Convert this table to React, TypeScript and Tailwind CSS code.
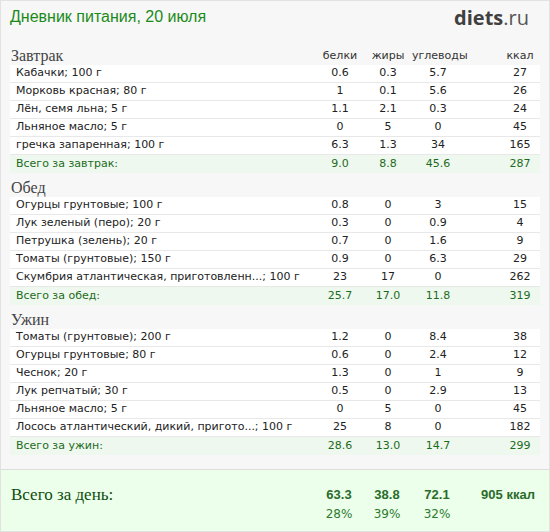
import React from "react";

type Item = { name: string; p: string; f: string; c: string; k: string };
type Meal = { title: string; items: Item[]; total: { label: string; p: string; f: string; c: string; k: string } };

const meals: Meal[] = [
  {
    title: "Завтрак",
    items: [
      { name: "Кабачки; 100 г", p: "0.6", f: "0.3", c: "5.7", k: "27" },
      { name: "Морковь красная; 80 г", p: "1", f: "0.1", c: "5.6", k: "26" },
      { name: "Лён, семя льна; 5 г", p: "1.1", f: "2.1", c: "0.3", k: "24" },
      { name: "Льняное масло; 5 г", p: "0", f: "5", c: "0", k: "45" },
      { name: "гречка запаренная; 100 г", p: "6.3", f: "1.3", c: "34", k: "165" },
    ],
    total: { label: "Всего за завтрак:", p: "9.0", f: "8.8", c: "45.6", k: "287" },
  },
  {
    title: "Обед",
    items: [
      { name: "Огурцы грунтовые; 100 г", p: "0.8", f: "0", c: "3", k: "15" },
      { name: "Лук зеленый (перо); 20 г", p: "0.3", f: "0", c: "0.9", k: "4" },
      { name: "Петрушка (зелень); 20 г", p: "0.7", f: "0", c: "1.6", k: "9" },
      { name: "Томаты (грунтовые); 150 г", p: "0.9", f: "0", c: "6.3", k: "29" },
      { name: "Скумбрия атлантическая, приготовленн...; 100 г", p: "23", f: "17", c: "0", k: "262" },
    ],
    total: { label: "Всего за обед:", p: "25.7", f: "17.0", c: "11.8", k: "319" },
  },
  {
    title: "Ужин",
    items: [
      { name: "Томаты (грунтовые); 200 г", p: "1.2", f: "0", c: "8.4", k: "38" },
      { name: "Огурцы грунтовые; 80 г", p: "0.6", f: "0", c: "2.4", k: "12" },
      { name: "Чеснок; 20 г", p: "1.3", f: "0", c: "1", k: "9" },
      { name: "Лук репчатый; 30 г", p: "0.5", f: "0", c: "2.9", k: "13" },
      { name: "Льняное масло; 5 г", p: "0", f: "5", c: "0", k: "45" },
      { name: "Лосось атлантический, дикий, пригото...; 100 г", p: "25", f: "8", c: "0", k: "182" },
    ],
    total: { label: "Всего за ужин:", p: "28.6", f: "13.0", c: "14.7", k: "299" },
  },
];

const cols = "grid grid-cols-[1fr_48px_48px_52px_76px] items-center";

const Row = ({ name, p, f, c, k, total }: Item & { total?: boolean }) => (
  <div
    className={`${cols} h-[18px] ${
      total ? "bg-[#eef8ee] text-[#1d6b1d]" : "bg-white text-[#222] border-b border-[#e8e8e8]"
    }`}
  >
    <span className="pl-[6px] whitespace-nowrap overflow-hidden">{name}</span>
    <span className="text-center">{p}</span>
    <span className="text-center">{f}</span>
    <span className="text-center">{c}</span>
    <span className="text-center pl-[36px]">{k}</span>
  </div>
);

export default function App() {
  return (
    <div className="w-[550px] h-[532px] bg-[#f7f7f7] border border-[#e2e2e2] flex flex-col font-['DejaVu_Sans',sans-serif] text-[11px]">
      <div className="flex justify-between items-start px-[9px] pt-[6px] h-[46px]">
        <h1 className="font-['Liberation_Sans',sans-serif] text-[16px] leading-[20px] text-[#1b8a1b]">
          Дневник питания, 20 июля
        </h1>
        <div className="font-['Open_Sans',sans-serif] text-[20px] leading-[24px] mr-[11px] mt-[-1px]">
          <span className="font-bold text-[#404040]">diets</span>
          <span className="text-[#555]">.ru</span>
        </div>
      </div>

      <div className="px-[9px] flex flex-col">
        {meals.map((m, i) => (
          <section key={m.title} className={i === 0 ? "" : "mt-[6px]"}>
            <div className={`${cols} h-[18px] leading-[18px]`}>
              <span className="font-['Liberation_Serif',serif] text-[16px] text-[#444] pl-[1px]">
                {m.title}
              </span>
              {i === 0 && (
                <>
                  <span className="text-center text-[#333]">белки</span>
                  <span className="text-center text-[#333]">жиры</span>
                  <span className="text-center text-[#333]">углеводы</span>
                  <span className="text-center text-[#333] pl-[36px]">ккал</span>
                </>
              )}
            </div>
            {m.items.map((it) => (
              <Row key={it.name} {...it} />
            ))}
            <Row name={m.total.label} p={m.total.p} f={m.total.f} c={m.total.c} k={m.total.k} total />
          </section>
        ))}
      </div>

      <div className="mt-auto h-[62px] bg-[#ebffeb] border-t border-[#dcdcdc] px-[10px] pt-[12px]">
        <div className={`${cols} h-[22px]`}>
          <span className="font-['Liberation_Serif',serif] text-[17px] text-[#0d4d0d]">
            Всего за день:
          </span>
          <span className="text-center font-['Liberation_Sans',sans-serif] font-bold text-[13px] text-[#2a6b2a]">63.3</span>
          <span className="text-center font-['Liberation_Sans',sans-serif] font-bold text-[13px] text-[#2a6b2a]">38.8</span>
          <span className="text-center font-['Liberation_Sans',sans-serif] font-bold text-[13px] text-[#2a6b2a]">72.1</span>
          <span className="text-center font-['Liberation_Sans',sans-serif] font-bold text-[13px] text-[#2a6b2a] pl-[14px]">905 ккал</span>
        </div>
        <div className={`${cols} h-[20px] text-[12px] text-[#2f7a2f]`}>
          <span></span>
          <span className="text-center">28%</span>
          <span className="text-center">39%</span>
          <span className="text-center">32%</span>
          <span></span>
        </div>
      </div>
    </div>
  );
}
